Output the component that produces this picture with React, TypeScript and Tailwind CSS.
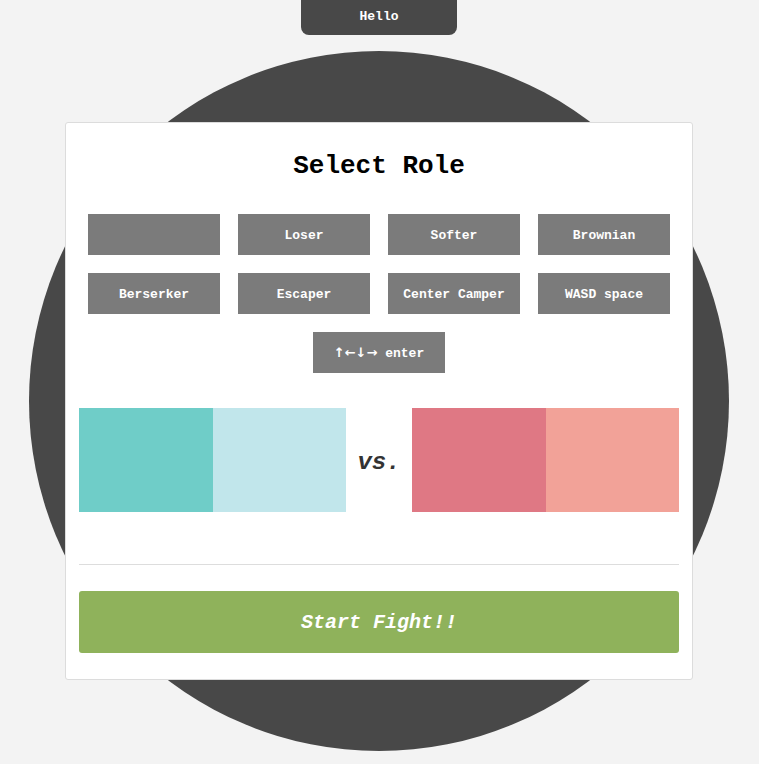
import React from "react";

const roles = [
  "",
  "Loser",
  "Softer",
  "Brownian",
  "Berserker",
  "Escaper",
  "Center Camper",
  "WASD space",
];

const RoleButton: React.FC<{ children?: React.ReactNode }> = ({ children }) => (
  <button className="h-[41px] w-[132px] bg-[#7b7b7b] pt-[2px] text-[13px] font-bold text-white">
    {children}
  </button>
);

export default function App() {
  return (
    <div
      className="relative min-h-[764px] overflow-hidden bg-[#f3f3f3]"
      style={{ fontFamily: '"Liberation Mono", "Courier New", monospace' }}
    >
      {/* backdrop circle */}
      <div className="absolute left-[29px] top-[51px] size-[700px] rounded-full bg-[#484848]" />

      <div className="relative w-[758px]">
        {/* top tab */}
        <div className="mx-auto flex h-[35px] w-[156px] items-center justify-center rounded-b-lg bg-[#484848] pb-[1px] text-[13px] font-bold text-white">
          Hello
        </div>

        {/* role card */}
        <div className="mx-auto mt-[87px] w-[628px] rounded-[3px] border border-[#dcdcdc] bg-white px-[13px] pb-[26px] pt-[13px]">
          <h1 className="mt-[15px] text-center text-[26px] font-bold leading-[30px] text-black">
            Select Role
          </h1>

          <div className="mt-[33px] flex flex-col items-center gap-[18px]">
            <div className="grid grid-cols-4 gap-[18px]">
              {roles.map((role, i) => (
                <RoleButton key={i}>{role}</RoleButton>
              ))}
            </div>
            <RoleButton>
              <span
                className="text-[13px] font-bold"
                style={{ fontFamily: '"DejaVu Sans", sans-serif' }}
              >
                ↑←↓→
              </span>{" "}
              enter
            </RoleButton>
          </div>

          {/* teams */}
          <div className="mt-[35px] flex h-[104px] items-stretch">
            <div className="flex w-[267px]">
              <div className="flex-1 bg-[#6fcdc8]" />
              <div className="flex-1 bg-[#c1e6eb]" />
            </div>
            <div className="flex flex-1 items-center justify-center pt-[6px] text-[24px] font-bold italic text-[#333]">
              vs.
            </div>
            <div className="flex w-[267px]">
              <div className="flex-1 bg-[#df7884]" />
              <div className="flex-1 bg-[#f2a298]" />
            </div>
          </div>

          <hr className="mt-[52px] border-t border-[#dddddd]" />

          <button className="mt-[26px] flex h-[62px] w-full items-center justify-center rounded-[3px] bg-[#8fb25b] pt-[2px] text-[20px] font-bold italic text-white">
            Start Fight!!
          </button>
        </div>
      </div>
    </div>
  );
}
